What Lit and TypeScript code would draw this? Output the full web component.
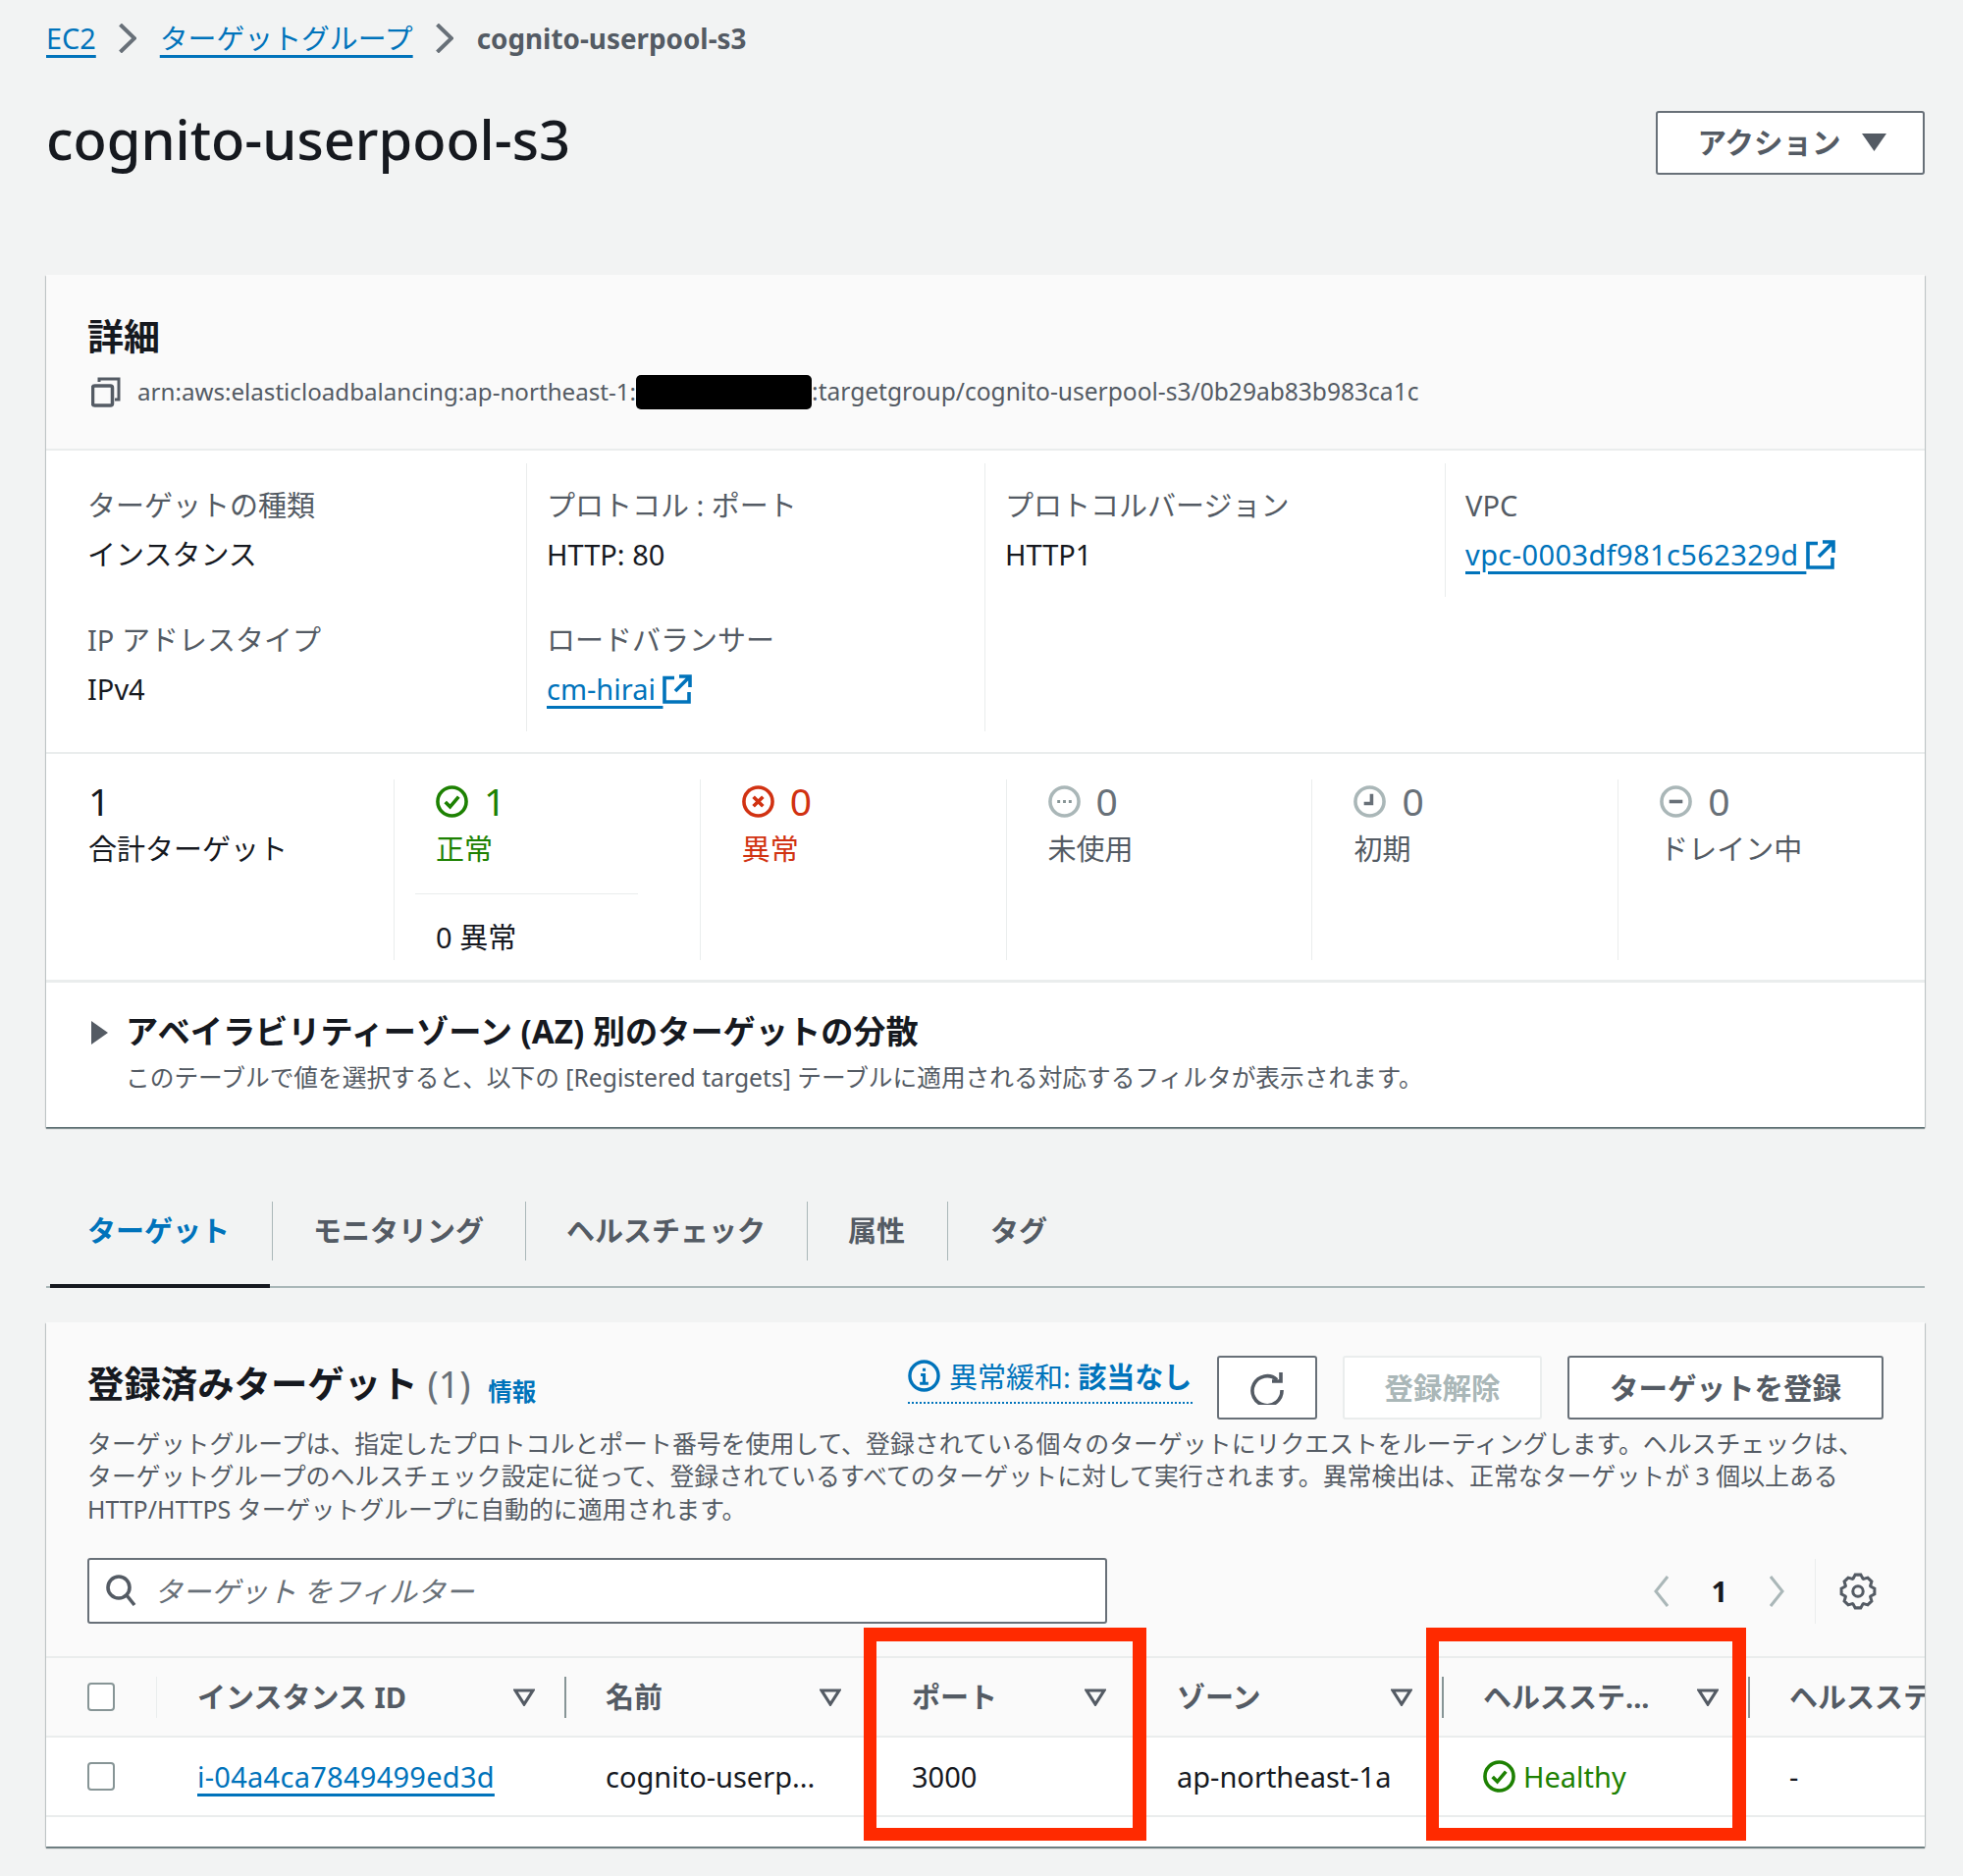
import { LitElement, html, css, svg } from "lit";
import { customElement } from "lit/decorators.js";

const ext = html`<svg class="ext" viewBox="0 0 30 30" fill="none" stroke="#0073bb" stroke-width="3.6"><path d="M12 3.500H2v24.500h25V18"/><path d="M17 2h11v11M28 2L13 17"/></svg>`;
const statusIcon = (color: string, inner: unknown) => html`<svg class="sicon" viewBox="0 0 34 34" fill="none" stroke=${color} stroke-width="3.700"><circle cx="17" cy="17" r="15"/>${inner}</svg>`;
const checkPath = svg`<path d="M10 17.500l5 5 9-10.500"/>`;
const xPath = svg`<path d="M12 12l10 10M22 12L12 22"/>`;
const dots = svg`<path d="M9.500 17h3M15.500 17h3M21.500 17h3" stroke-width="3" stroke="#879596"/>`;
const clock = svg`<path d="M19 9v10h-8" stroke="#687078"/>`;
const minus = svg`<path d="M10 17h14" stroke="#687078"/>`;
const filt = html`<svg class="filt" viewBox="0 0 22 18" fill="none" stroke="#545b64" stroke-width="3.200"><path d="M2 2h18L11 16z"/></svg>`;
const chev = html`<svg class="chev" viewBox="0 0 18 30" fill="none" stroke="#687078" stroke-width="4"><path d="M1.500 1L16 15L1.500 29"/></svg>`;

function gearPath(): string {
  const n = 8;
  const pts: string[] = [];
  for (let i = 0; i < n; i++) {
    const a = (i / n) * Math.PI * 2 - Math.PI / 2;
    const w = Math.PI / n;
    const seq: [number, number][] = [
      [14.5, a - w * 0.95],
      [18, a - w * 0.42],
      [18, a + w * 0.42],
      [14.5, a + w * 0.95],
    ];
    for (const [r, t] of seq) pts.push(`${(20 + r * Math.cos(t)).toFixed(2)} ${(20 + r * Math.sin(t)).toFixed(2)}`);
  }
  return "M" + pts.join("L") + "Z";
}

@customElement("app-root")
export class AppRoot extends LitElement {
  static styles = css`
    :host {
      display: block;
      width: 2000px;
      height: 1911px;
      overflow: hidden;
      background: #f2f3f3;
      color: #16191f;
      font-family: "Noto Sans", "Noto Sans CJK JP", sans-serif;
      font-size: 29px;
      line-height: 40px;
    }
    * { box-sizing: border-box; }
    .page { padding: 0 39px 0 47px; }
    a { color: #0073bb; text-decoration: underline; text-decoration-thickness: 3px; text-underline-offset: 6px; }
    .crumbs { height: 78px; margin-bottom: 2px; display: flex; align-items: center; gap: 24px; font-size: 28.85px; }
    .crumbs b { color: #545b64; font-weight: 700; font-size: 27.85px; }
    .chev { width: 18px; height: 30px; flex: none; margin-left: -1px; }
    .head { height: 200px; display: flex; justify-content: space-between; padding-top: 33px; align-items: flex-start; }
    h1 { margin: -4px 0 0; font-size: 56px; font-weight: 500; line-height: 64px; }
    .btn { display: flex; align-items: center; justify-content: center; height: 65px; background: #fff; border: 2px solid #687078; border-radius: 3px; color: #545b64; font-weight: 700; font-size: 29.5px; }
    .act { width: 274px; height: 65px; gap: 21px; padding: 0 0 2px 3px; }
    .act svg { width: 25px; height: 18px; }
    .card { background: #fff; box-shadow: 0 2px 1px 0 rgba(0,28,36,.45), 1px 1px 1px 0 rgba(0,28,36,.15), -1px 1px 1px 0 rgba(0,28,36,.15); }
    .chead { background: #fafafa; height: 179px; padding: 38px 42px 0; border-bottom: 2px solid #eaeded; }
    .chead h2 { margin: 0; font-size: 37px; line-height: 50px; font-weight: 700; }
    .arn { display: flex; align-items: center; margin-top: 11px; font-size: 24.55px; color: #545b64; white-space: nowrap; }
    .arn svg { width: 30px; height: 31px; margin: 0 17px 0 4px; flex: none; }
    .arnp { font-size: 24.15px; }
    .mask { display: inline-block; width: 179px; height: 35px; background: #000; border-radius: 5px; flex: none; }
    .meta { display: grid; grid-template-columns: 468px 467px 469px 1fr; padding: 13px 0 21px 21px; height: 309px; border-bottom: 2px solid #eaeded; }
    .col { padding: 23px 0 0 20px; border-left: 1px solid #eaeded; }
    .col:first-child { border-left: 0; padding-left: 21px; }
    .col.short { height: 136px; }
    .item { margin-bottom: 47px; }
    .item:last-child { margin-bottom: 0; }
    .lab { color: #545b64; height: 40px; }
    .val { margin-top: 10px; height: 40px; display: flex; align-items: center; white-space: nowrap; }
    .ext { width: 30px; height: 30px; flex: none; margin-left: 0; }
    .vpc { letter-spacing: .4px; }
    .iid { letter-spacing: .27px; }
    .stats { display: grid; grid-template-columns: 311px repeat(5, 311.8px); padding: 26px 0 20px 43px; height: 233px; border-bottom: 3px solid #eaeded; }
    .st { padding-left: 42px; border-left: 1px solid #eaeded; }
    .st:first-child { padding-left: 0; border-left: 0; }
    .num { display: flex; align-items: center; gap: 16px; font-size: 39px; line-height: 44px; height: 44px; color: #687078; }
    .sicon { width: 33px; height: 33px; flex: none; }
    .stl { margin-top: 7px; height: 40px; color: #545b64; }
    .sep { border-top: 1px solid #eaeded; margin: 25px 0 24px -21px; width: 227px; }
    .dark { color: #16191f; }
    .ok { color: #1d8102; }
    .bad { color: #d13212; }
    .exp { height: 147px; padding: 27px 0 0 46px; display: flex; gap: 18px; }
    .exp > svg { width: 17px; height: 24px; margin-top: 12px; flex: none; }
    .exp h3 { margin: 0; font-size: 33.2px; line-height: 46px; font-weight: 700; }
    .exp p { margin: 6px 0 0; font-size: 24.7px; line-height: 36px; color: #545b64; white-space: nowrap; }
    .tabs { margin-top: 76px; height: 88px; display: grid; grid-template-columns: 4px 227px 258px 287px 143px 1fr; border-bottom: 2px solid #aab7b8; }
    .tab { position: relative; height: 60px; line-height: 60px; padding-left: 41px; font-weight: 700; color: #545b64; border-right: 1px solid #aab7b8; white-space: nowrap; }
    .tab.first { padding-left: 38px; color: #0073bb; }
    .tab.first::after { content: ""; position: absolute; left: 0; right: 2px; top: 84px; height: 4px; background: #16191f; }
    .tab.last { border-right: 0; padding-left: 43px; }
    .c2 { position: relative; margin-top: 35px; height: 534px; }
    .c2top { background: #fafafa; padding: 34px 42px 0; height: 340px; }
    .tools { display: flex; align-items: center; height: 65px; }
    .tools h2 { margin: 0 0 8px; font-size: 37.4px; line-height: 50px; font-weight: 700; white-space: nowrap; }
    .tools h2 span { font-weight: 400; color: #687078; margin-left: 10px; }
    .infol { margin-left: 18px; font-size: 24.5px; font-weight: 700; color: #0073bb; text-decoration: none; margin-top: 8px; }
    .sp { flex: 1; }
    .mit { display: flex; align-items: center; gap: 9px; height: 49px; margin-bottom: 16px; border-bottom: 2px dotted #0073bb; color: #0073bb; width: 290px; white-space: nowrap; padding-bottom: 3px; }
    .mit svg { width: 33px; height: 33px; flex: none; margin-bottom: 3px; }
    .btn.rf { width: 102px; margin-left: 25px; }
    .btn.rf svg { width: 36px; height: 34px; }
    .btn.off { width: 203px; margin-left: 26px; border-color: #eaeded; color: #aab7b8; }
    .btn.reg { width: 322px; margin-left: 26px; }
    .desc { margin: 8px 0 0; font-size: 24.9px; line-height: 33.4px; color: #545b64; white-space: nowrap; }
    .filter { margin-top: 33px; height: 67px; display: flex; align-items: center; }
    .inp { width: 1039px; height: 67px; background: #fff; border: 2px solid #687078; border-radius: 3px; display: flex; align-items: center; padding-left: 17px; gap: 18px; }
    .inp svg { width: 31px; height: 33px; flex: none; }
    .inp span { font-style: italic; color: #687078; }
    .pager { flex: 1; display: flex; align-items: center; height: 66px; padding-top: 1px; }
    .pg { width: 15px; height: 32px; flex: none; }
    .pn { margin: 0 43px 0 43px; font-weight: 700; }
    .gearb { margin-left: 31px; border-left: 1px solid #eaeded; height: 66px; width: 70px; display: flex; align-items: center; padding-left: 24px; }
    .gearb svg { width: 38px; height: 38px; flex: none; }
    .table { overflow: hidden; }
    .r { display: grid; grid-template-columns: 112px 416px 312px 270px 312px 312px 300px; align-items: center; white-space: nowrap; height: 81px; border-bottom: 2px solid #eaeded; }
    .r.th { height: 83px; background: #fafafa; border-top: 2px solid #eaeded; font-weight: 700; color: #545b64; }
    .cell { padding-left: 42px; display: flex; align-items: center; justify-content: space-between; height: 42px; }
    .r.th .cell.line { border-left: 2px solid #879596; padding-left: 40px; }
    .r.th .cell.soft { border-left: 1px solid #eaeded; padding-left: 41px; }
    .cbc { padding-left: 42px; display: flex; align-items: center; }
    .cb { display: block; width: 28px; height: 29px; background: #fff; border: 2px solid #879596; border-radius: 4px; }
    .filt { width: 22px; height: 18px; flex: none; margin-right: 30px; }
    .health { display: flex; align-items: center; gap: 8px; color: #1d8102; }
    .mark { position: absolute; border: solid #ff2a00; border-width: 14px 14px 13px 13px; top: 311px; height: 217px; }
    .m1 { left: 833px; width: 288px; }
    .m2 { left: 1406px; width: 326px; }
  `;

  render() {
    return html`<div class="page">
      <nav class="crumbs">
        <a href="#">EC2</a>${chev}<a href="#">ターゲットグループ</a>${chev}<b>cognito-userpool-s3</b>
      </nav>
      <header class="head">
        <h1>cognito-userpool-s3</h1>
        <div class="btn act">アクション
          <svg viewBox="0 0 25 18"><path d="M0 0h25L12.500 18z" fill="#545b64"/></svg>
        </div>
      </header>

      <section class="card">
        <div class="chead">
          <h2>詳細</h2>
          <div class="arn">
            <svg viewBox="0 0 30 31" fill="none" stroke="#545b64" stroke-width="3"><rect x="1.500" y="9" width="20" height="20" rx="2" stroke-width="3.500"/><path d="M8 5V2h20v21h-4"/></svg>
            <span class="arnp">arn:aws:elasticloadbalancing:ap-northeast-1:</span><span class="mask"></span>:targetgroup/cognito-userpool-s3/0b29ab83b983ca1c
          </div>
        </div>
        <div class="meta">
          <div class="col">
            <div class="item"><div class="lab">ターゲットの種類</div><div class="val">インスタンス</div></div>
            <div class="item"><div class="lab">IP アドレスタイプ</div><div class="val">IPv4</div></div>
          </div>
          <div class="col">
            <div class="item"><div class="lab">プロトコル : ポート</div><div class="val">HTTP: 80</div></div>
            <div class="item"><div class="lab">ロードバランサー</div><div class="val"><a href="#">cm-hirai&nbsp;</a>${ext}</div></div>
          </div>
          <div class="col">
            <div class="item"><div class="lab">プロトコルバージョン</div><div class="val">HTTP1</div></div>
          </div>
          <div class="col short">
            <div class="item"><div class="lab">VPC</div><div class="val"><a class="vpc" href="#">vpc-0003df981c562329d&nbsp;</a>${ext}</div></div>
          </div>
        </div>
        <div class="stats">
          <div class="st"><div class="num dark">1</div><div class="stl dark">合計ターゲット</div></div>
          <div class="st">
            <div class="num ok">${statusIcon("#1d8102", checkPath)}1</div>
            <div class="stl ok">正常</div>
            <div class="sep"></div>
            <div class="dark">0 異常</div>
          </div>
          <div class="st"><div class="num bad">${statusIcon("#d13212", xPath)}0</div><div class="stl bad">異常</div></div>
          <div class="st"><div class="num">${statusIcon("#aab7b8", dots)}0</div><div class="stl">未使用</div></div>
          <div class="st"><div class="num">${statusIcon("#aab7b8", clock)}0</div><div class="stl">初期</div></div>
          <div class="st"><div class="num">${statusIcon("#aab7b8", minus)}0</div><div class="stl">ドレイン中</div></div>
        </div>
        <div class="exp">
          <svg viewBox="0 0 17 24"><path d="M0 0l17 12L0 24z" fill="#545b64"/></svg>
          <div>
            <h3>アベイラビリティーゾーン (AZ) 別のターゲットの分散</h3>
            <p>このテーブルで値を選択すると、以下の [Registered targets] テーブルに適用される対応するフィルタが表示されます。</p>
          </div>
        </div>
      </section>

      <div class="tabs">
        <div></div>
        <div class="tab first">ターゲット</div>
        <div class="tab">モニタリング</div>
        <div class="tab">ヘルスチェック</div>
        <div class="tab">属性</div>
        <div class="tab last">タグ</div>
      </div>

      <section class="card c2">
        <div class="c2top">
          <div class="tools">
            <h2>登録済みターゲット<span>(1)</span></h2>
            <a class="infol" href="#">情報</a>
            <div class="sp"></div>
            <div class="mit">
              <svg viewBox="0 0 34 34" fill="none" stroke="#0073bb" stroke-width="3.500"><circle cx="17" cy="17" r="15"/><path d="M17 9v3M13.500 16H17v9M12.500 25h9" stroke-width="3.200"/></svg>
              <span>異常緩和: <b>該当なし</b></span>
            </div>
            <div class="btn rf">
              <svg viewBox="0 0 36 34" fill="none" stroke="#545b64" stroke-width="3.600"><path d="M28 8.500A15 15 0 1 0 33 19"/><path d="M32 1v9h-9"/></svg>
            </div>
            <div class="btn off">登録解除</div>
            <div class="btn reg">ターゲットを登録</div>
          </div>
          <p class="desc">ターゲットグループは、指定したプロトコルとポート番号を使用して、登録されている個々のターゲットにリクエストをルーティングします。ヘルスチェックは、<br>ターゲットグループのヘルスチェック設定に従って、登録されているすべてのターゲットに対して実行されます。異常検出は、正常なターゲットが 3 個以上ある<br>HTTP/HTTPS ターゲットグループに自動的に適用されます。</p>
          <div class="filter">
            <div class="inp">
              <svg viewBox="0 0 31 33" fill="none" stroke="#545b64" stroke-width="3.600"><circle cx="13" cy="13" r="11"/><path d="M21 21l8 10"/></svg>
              <span>ターゲット をフィルター</span>
            </div>
            <div class="pager">
              <div class="sp"></div>
              <svg class="pg" viewBox="0 0 15 32" fill="none" stroke="#aab7b8" stroke-width="3"><path d="M14 1L2 16l12 15"/></svg>
              <span class="pn">1</span>
              <svg class="pg" viewBox="0 0 15 32" fill="none" stroke="#aab7b8" stroke-width="3"><path d="M1 1l12 15L1 31"/></svg>
              <div class="gearb">
                <svg viewBox="0 0 40 40" fill="none" stroke="#545b64" stroke-width="3.200"><path d=${gearPath()}/><circle cx="20" cy="20" r="5.500"/></svg>
              </div>
            </div>
          </div>
        </div>
        <div class="table">
          <div class="r th">
            <div class="cbc"><span class="cb"></span></div>
            <div class="cell soft">インスタンス ID${filt}</div>
            <div class="cell line">名前${filt}</div>
            <div class="cell line">ポート${filt}</div>
            <div class="cell line">ゾーン${filt}</div>
            <div class="cell line">ヘルスステ...${filt}</div>
            <div class="cell line">ヘルスステータスの詳細</div>
          </div>
          <div class="r">
            <div class="cbc"><span class="cb"></span></div>
            <div class="cell"><a class="iid" href="#">i-04a4ca7849499ed3d</a></div>
            <div class="cell">cognito-userp...</div>
            <div class="cell">3000</div>
            <div class="cell">ap-northeast-1a</div>
            <div class="cell"><span class="health">
              <svg class="sicon" viewBox="0 0 34 34" fill="none" stroke="#1d8102" stroke-width="3.700"><circle cx="17" cy="17" r="15"/><path d="M10 17.500l5 5 9-10.500"/></svg>Healthy</span></div>
            <div class="cell">-</div>
          </div>
        </div>
        <div class="mark m1"></div>
        <div class="mark m2"></div>
      </section>
    </div>`;
  }
}
